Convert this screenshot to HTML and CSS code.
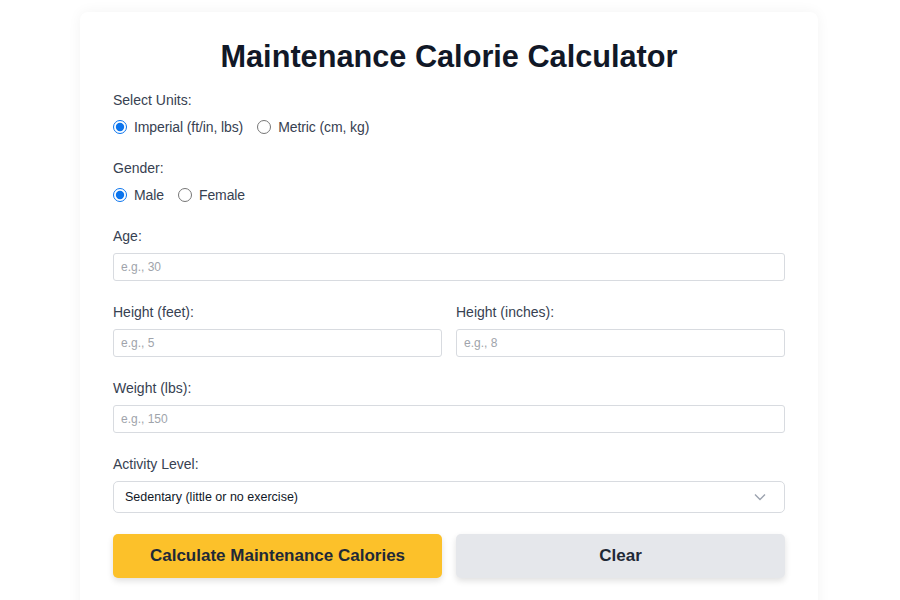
FILE: index.html
```html
<!DOCTYPE html>
<html lang="en">
<head>
  <meta charset="UTF-8">
  <meta name="viewport" content="width=device-width, initial-scale=1.0">
  <title>Maintenance Calorie Calculator</title>
  <link rel="stylesheet" href="styles.css">
</head>
<body>
  <div class="calculator">
    <h1>Maintenance Calorie Calculator</h1>

    <div class="field">
      <span class="field-label">Select Units:</span>
      <div class="radio-row">
        <label class="radio"><input type="radio" name="units" checked> Imperial (ft/in, lbs)</label>
        <label class="radio"><input type="radio" name="units"> Metric (cm, kg)</label>
      </div>
    </div>

    <div class="field">
      <span class="field-label">Gender:</span>
      <div class="radio-row">
        <label class="radio"><input type="radio" name="gender" checked> Male</label>
        <label class="radio"><input type="radio" name="gender"> Female</label>
      </div>
    </div>

    <div class="field">
      <label class="field-label" for="age">Age:</label>
      <input class="text-input" type="number" id="age" placeholder="e.g., 30">
    </div>

    <div class="two-col">
      <div class="field">
        <label class="field-label" for="feet">Height (feet):</label>
        <input class="text-input" type="number" id="feet" placeholder="e.g., 5">
      </div>
      <div class="field">
        <label class="field-label" for="inches">Height (inches):</label>
        <input class="text-input" type="number" id="inches" placeholder="e.g., 8">
      </div>
    </div>

    <div class="field">
      <label class="field-label" for="weight">Weight (lbs):</label>
      <input class="text-input" type="number" id="weight" placeholder="e.g., 150">
    </div>

    <div class="field">
      <label class="field-label" for="activity">Activity Level:</label>
      <div class="select-wrap">
        <select id="activity" class="select-input">
          <option>Sedentary (little or no exercise)</option>
          <option>Lightly active (1-3 days/week)</option>
          <option>Moderately active (3-5 days/week)</option>
          <option>Very active (6-7 days/week)</option>
          <option>Extra active (physical job)</option>
        </select>
        <svg class="chevron" width="14" height="14" viewBox="0 0 14 14">
          <path d="M2 4.5 L7 9.5 L12 4.5" fill="none" stroke="#9ca3af" stroke-width="1.4"/>
        </svg>
      </div>
    </div>

    <div class="buttons">
      <button class="btn btn-calc">Calculate Maintenance Calories</button>
      <button class="btn btn-clear">Clear</button>
    </div>
  </div>
</body>
</html>
```

FILE: styles.css
```css
body {
  font-family: "Liberation Sans", Arial, sans-serif;
  margin: 0;
  padding: 12px 2px 0 0;
  background-color: #fff;
  color: #374151;
}

.calculator {
  box-sizing: border-box;
  width: 738px;
  margin: 0 auto;
  padding: 28px 33px 40px;
  background-color: #fff;
  border-radius: 8px;
  box-shadow: 0 0 14px rgba(0, 0, 0, 0.05);
}

.calculator h1 {
  margin: 0 0 16px;
  text-align: center;
  font-size: 30.7px;
  line-height: 34px;
  color: #111827;
}

.field {
  display: flex;
  flex-direction: column;
  margin-bottom: 21px;
}

.field-label {
  font-size: 14px;
  line-height: 20px;
  margin-bottom: 7px;
  color: #374151;
}

.radio-row {
  display: flex;
  gap: 14px;
  height: 20px;
  align-items: center;
}

.radio {
  display: flex;
  align-items: center;
  gap: 7px;
  font-size: 14px;
  letter-spacing: -0.1px;
  color: #374151;
}

.radio input {
  margin: 0;
  width: 14px;
  height: 14px;
  accent-color: #0b74ed;
}

.text-input {
  box-sizing: border-box;
  height: 28px;
  padding: 0 7px;
  border: 1px solid #d8dbe0;
  border-radius: 3px;
  font-family: inherit;
  font-size: 12px;
  color: #111827;
}

.text-input::placeholder {
  color: #a0a4ab;
}

.two-col {
  display: grid;
  grid-template-columns: 1fr 1fr;
  gap: 14px;
}

.select-wrap {
  position: relative;
}

.select-input {
  box-sizing: border-box;
  width: 100%;
  height: 32px;
  padding: 0 11px;
  appearance: none;
  background-color: #fff;
  border: 1px solid #d8dbe0;
  border-radius: 5px;
  font-family: inherit;
  font-size: 12.5px;
  color: #111827;
}

.chevron {
  position: absolute;
  right: 18px;
  top: 9px;
  pointer-events: none;
}

.buttons {
  display: grid;
  grid-template-columns: 1fr 1fr;
  gap: 14px;
  margin-top: 2px;
}

.btn {
  height: 44px;
  border: none;
  border-radius: 5px;
  font-family: inherit;
  font-size: 17px;
  font-weight: bold;
  color: #1f2937;
  cursor: pointer;
  box-shadow: 0 3px 6px rgba(0, 0, 0, 0.12);
}

.btn-calc {
  background-color: #fcc12a;
}

.btn-clear {
  background-color: #e5e7eb;
}
```
